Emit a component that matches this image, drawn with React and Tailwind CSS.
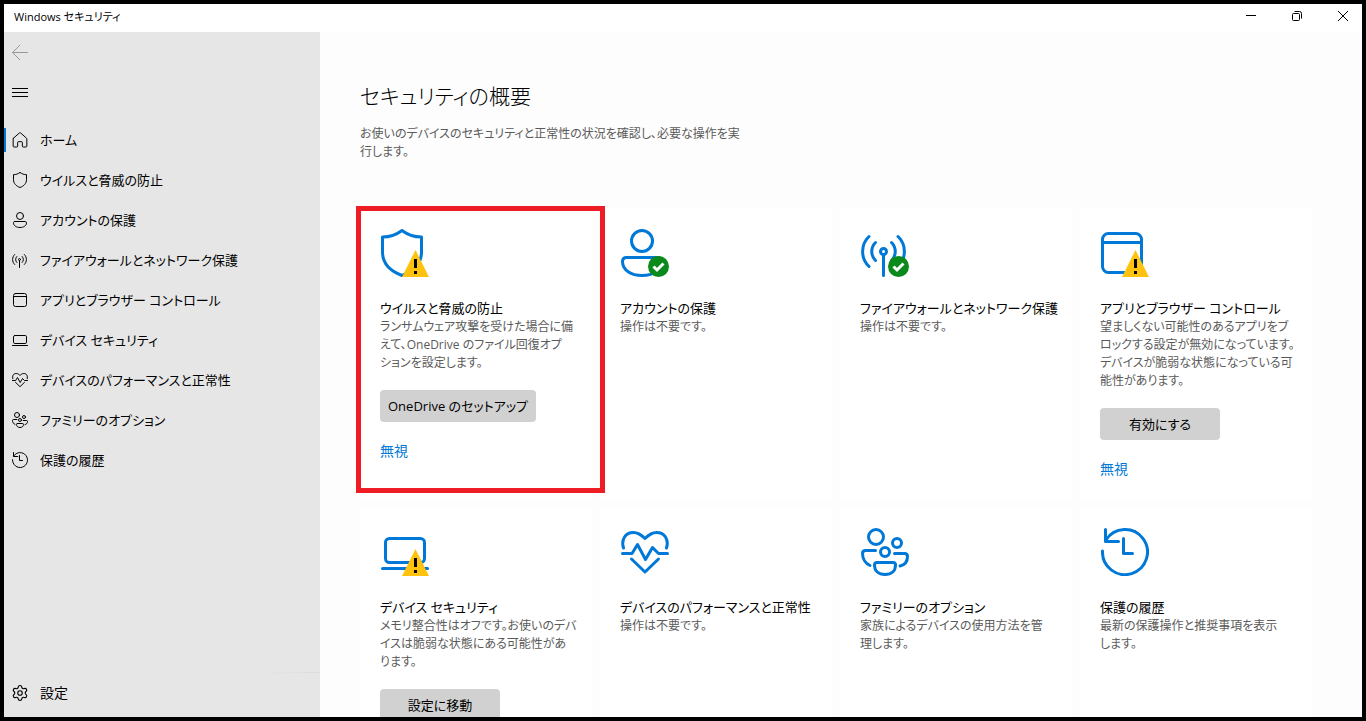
import { Settings } from 'lucide-react';

const ICONS = {
    home: <path d="M4.500 18.500 22 3a3 3 0 0 1 4 0l17.500 15.500a3 3 0 0 1 1 2V42a3 3 0 0 1-3 3H34a3 3 0 0 1-3-3V31a2 2 0 0 0-2-2H19a2 2 0 0 0-2 2v11a3 3 0 0 1-3 3H6.500a3 3 0 0 1-3-3V20.500a3 3 0 0 1 1-2Z" />,
    shield: <path d="M21 1.500C15 6 8.500 8 1.500 8v15c0 11 7.500 19 19.500 23.500C33 42 40.500 34 40.500 23V8C33.500 8 27 6 21 1.500Z" />,
    account: (
        <>
            <circle cx="21" cy="12" r="10.500" />
            <path d="M5.500 28.500h31c2.500 0 4 1.500 4 4 0 8.500-8.500 14-19.500 14s-19.500-5.500-19.500-14c0-2.500 1.500-4 4-4Z" />
        </>
    ),
    network: (
        <>
            <circle cx="22.500" cy="22.500" r="3" />
            <path d="M22.500 26v20.500M8 7.500c-8.500 8-8.500 22 0 30M14.500 13.500c-5 5-5 13 0 18M30.500 13.500c5 5 5 13 0 18M37 7.500c8.500 8 8.500 22 0 30" />
        </>
    ),
    browser: (
        <>
            <rect x="1.500" y="4.500" width="39" height="39" rx="6" />
            <path d="M1.500 13.500h39" />
        </>
    ),
    laptop: (
        <>
            <rect x="4.500" y="10.500" width="39" height="24" rx="4" />
            <path d="M1.500 40.500h45" />
        </>
    ),
    heart: (
        <>
            <path d="M2.500 20C0 12 4 4.500 12.500 4.500c5.500 0 8.500 3 11.500 6 3-3 6-6 11.500-6C44 4.500 48 12 45.500 20" />
            <path d="M1.500 25.500H11l5.500-9 8 15 7-12 6 6h9M10.500 31 24 44l13.500-13" />
        </>
    ),
    family: (
        <>
            <circle cx="15" cy="9" r="7.500" />
            <circle cx="36" cy="15" r="4.500" />
            <circle cx="24" cy="24" r="4.500" />
            <path d="M14.500 22.500h-10c-2 0-3 1-3 3 0 5 3 10 7.500 12M33.500 25.500h10c2 0 3 1 3 3 0 5-3 8.500-7.500 9.500" />
            <path d="M16 34.500h16c1.500 0 2.500 1 2.500 2.500 0 6-4 9.500-10.500 9.500S13.500 43 13.500 37c0-1.500 1-2.500 2.500-2.500Z" />
        </>
    ),
    history: (
        <>
            <path d="M1.500 23A22.500 22.500 0 1 0 5 12" />
            <path d="M4.500 1.500v12h13M22.500 10.500v15h9" />
        </>
    )
};

// shield, account and browser are only 42 units wide, so the nav centres them
const NAV_ITEMS = [
    { icon: 'home', label: 'ホーム', active: true },
    { icon: 'shield', label: 'ウイルスと脅威の防止', narrow: true },
    { icon: 'account', label: 'アカウントの保護', narrow: true },
    { icon: 'network', label: 'ファイアウォールとネットワーク保護' },
    { icon: 'browser', label: 'アプリとブラウザー コントロール', narrow: true },
    { icon: 'laptop', label: 'デバイス セキュリティ' },
    { icon: 'heart', label: 'デバイスのパフォーマンスと正常性' },
    { icon: 'family', label: 'ファミリーのオプション' },
    { icon: 'history', label: '保護の履歴' }
];

const CARDS = [
    {
        icon: 'shield',
        badge: 'warning',
        title: 'ウイルスと脅威の防止',
        lines: ['ランサムウェア攻撃を受けた場合に備', 'えて、OneDrive のファイル回復オプ', 'ションを設定します。'],
        action: 'OneDrive のセットアップ',
        dismiss: true,
        highlighted: true
    },
    { icon: 'account', badge: 'ok', title: 'アカウントの保護', lines: ['操作は不要です。'] },
    { icon: 'network', badge: 'ok', title: 'ファイアウォールとネットワーク保護', lines: ['操作は不要です。'] },
    {
        icon: 'browser',
        badge: 'warning',
        title: 'アプリとブラウザー コントロール',
        lines: ['望ましくない可能性のあるアプリをブ', 'ロックする設定が無効になっています。', 'デバイスが脆弱な状態になっている可', '能性があります。'],
        action: '有効にする',
        dismiss: true
    },
    {
        icon: 'laptop',
        badge: 'warning',
        title: 'デバイス セキュリティ',
        lines: ['メモリ整合性はオフです。お使いのデバ', 'イスは脆弱な状態にある可能性があ', 'ります。'],
        action: '設定に移動'
    },
    { icon: 'heart', title: 'デバイスのパフォーマンスと正常性', lines: ['操作は不要です。'] },
    { icon: 'family', title: 'ファミリーのオプション', lines: ['家族によるデバイスの使用方法を管', '理します。'] },
    { icon: 'history', title: '保護の履歴', lines: ['最新の保護操作と推奨事項を表示', 'します。'] }
];

const Icon = ({ name, badge, className, viewBox = '0 0 48 48' }) => (
    <svg viewBox={viewBox} className={className} aria-hidden="true">
        <g fill="none" stroke="currentColor" strokeWidth="3" strokeLinecap="round" strokeLinejoin="round">
            {ICONS[name]}
        </g>
        {badge === 'warning' && (
            <>
                <path d="M34.500 21 48 48H21Z" fill="#ffc20e" />
                <path d="M33 30h3v9h-3zM33 42h3v3h-3z" fill="#000" />
            </>
        )}
        {badge === 'ok' && (
            <>
                <circle cx="37.500" cy="37.500" r="10.500" fill="#0a8a1a" />
                <path d="m32.500 37.500 3.500 3.500 6.500-6.500" fill="none" stroke="#fff" strokeWidth="3" />
            </>
        )}
    </svg>
);

const TitleBar = () => (
    <header className="flex h-7 shrink-0 items-center justify-between bg-white pl-[10px]">
        <span className="pb-0.5 text-[11px]">Windows セキュリティ</span>
        <div className="flex h-full">
            <button type="button" aria-label="最小化" className="flex w-[46px] items-center justify-center pb-1">
                <svg viewBox="0 0 10 10" className="size-[10px]" stroke="#000" fill="none">
                    <path d="M0 4.500h10" />
                </svg>
            </button>
            <button type="button" aria-label="元に戻す" className="flex w-[46px] items-center justify-center pb-1">
                <svg viewBox="0 0 10 10" className="size-[10px]" stroke="#000" fill="none">
                    <rect x="0.500" y="2.500" width="7" height="7" rx="1" />
                    <path d="M2.500.500h5a2 2 0 0 1 2 2v5" />
                </svg>
            </button>
            <button type="button" aria-label="閉じる" className="flex w-[42px] items-center justify-center pb-1 pl-1">
                <svg viewBox="0 0 10 10" className="size-[10px]" stroke="#000" fill="none">
                    <path d="m0 0 10 10M10 0 0 10" />
                </svg>
            </button>
        </div>
    </header>
);

const Sidebar = () => (
    <nav className="flex w-[316px] shrink-0 flex-col bg-[#e6e6e6] pb-1">
        <button type="button" aria-label="戻る" disabled className="flex h-10 w-10 items-center pl-2 text-[#999999]">
            <svg viewBox="0 0 16 16" className="size-4" stroke="currentColor" fill="none">
                <path d="M.500 8.500H16M8 1 .500 8.500 8 16" />
            </svg>
        </button>
        <button type="button" aria-label="メニュー" className="flex h-10 w-10 items-center pl-2">
            <svg viewBox="0 0 16 16" className="size-4" stroke="#000" fill="none">
                <path d="M0 4.500h16M0 8.500h16M0 12.500h16" />
            </svg>
        </button>
        <ul className="mt-2">
            {NAV_ITEMS.map((item) => (
                <li key={item.label} className="relative">
                    {item.active && <span className="absolute top-2 left-0 h-6 w-0.5 bg-[#0078d7]" />}
                    <a href="#" className="flex h-10 items-center gap-3 pl-2 text-[13px]">
                        <Icon
                            name={item.icon}
                            viewBox={item.narrow ? '-3 0 48 48' : '0 0 48 48'}
                            className="size-4 shrink-0"
                        />
                        {item.label}
                    </a>
                </li>
            ))}
        </ul>
        <div className="mt-auto ml-auto h-px w-14 bg-linear-to-r from-[#e6e6e6] to-[#dcdcdc]" />
        <a href="#" className="flex h-10 items-center gap-[11px] pl-[7px]">
            <Settings className="size-[18px]" strokeWidth={1.500} />
            設定
        </a>
    </nav>
);

const Card = ({ card }) => (
    <section className="relative bg-white px-5 pt-[21px] pb-5">
        <Icon name={card.icon} badge={card.badge} className="ml-px size-12 text-[#0078d7]" />
        <h2 className="mt-[21px] text-[13px] leading-5 whitespace-nowrap">{card.title}</h2>
        <p className="text-xs leading-[18px] whitespace-nowrap text-[#5a5a5a]">
            {card.lines.map((line) => (
                <span key={line} className="block">{line}</span>
            ))}
        </p>
        {card.action && (
            <button type="button" className="mt-[18px] block h-8 min-w-[120px] rounded-sm bg-[#d1d1d1] px-2 text-[13px]">
                {card.action}
            </button>
        )}
        {card.dismiss && (
            <a href="#" className="mt-[19px] block text-[#0078d7]">無視</a>
        )}
        {card.highlighted && (
            <div className="pointer-events-none absolute -top-0.5 -right-[13px] -left-1 bottom-[6px] z-10 border-[5px] border-[#ee1c25]" />
        )}
    </section>
);

const App = () => {
    return (
        <div
            lang="ja"
            className="flex h-screen flex-col overflow-hidden border-4 border-black bg-[#fdfdfd] font-['Open_Sans','Noto_Sans_CJK_JP',sans-serif] text-sm leading-5 text-black [font-feature-settings:'palt']"
        >
            <TitleBar />
            <div className="flex min-h-0 flex-1">
                <Sidebar />
                <main className="min-w-0 flex-1 overflow-y-auto px-10 pt-12 [scrollbar-width:none]">
                    <h1 className="text-[21px] leading-8 font-light">セキュリティの概要</h1>
                    <p className="mt-[13px] text-xs leading-[18px] text-[#5a5a5a]">
                        お使いのデバイスのセキュリティと正常性の状況を確認し、必要な操作を実<br />
                        行します。
                    </p>
                    <div className="mt-[47px] grid grid-cols-[repeat(auto-fill,232px)] gap-2">
                        {CARDS.map((card) => (
                            <Card key={card.title} card={card} />
                        ))}
                    </div>
                </main>
            </div>
        </div>
    );
};

export default App;
